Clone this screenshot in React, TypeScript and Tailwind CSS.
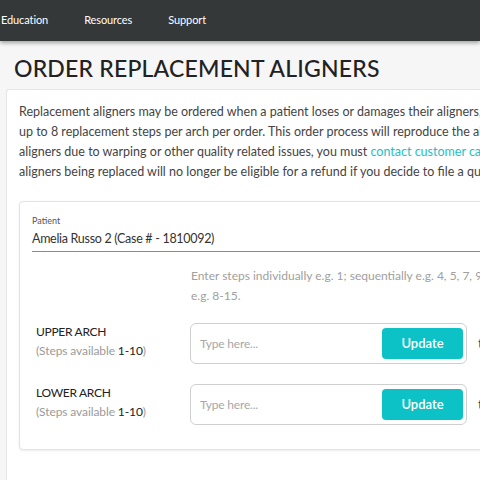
import React from "react";

const ArchRow: React.FC<{ label: string }> = ({ label }) => (
  <div className="flex items-center">
    <div className="-mt-[5px] w-[158px] pl-[4px] leading-[19px]">
      <div className="text-[12px] tracking-[-0.3px] text-[#222]">{label}</div>
      <div className="text-[12px] tracking-[-0.1px] text-[#9a9a9a]">
        (Steps available <span className="text-[#222]">1-10</span>)
      </div>
    </div>
    <div className="flex h-[41px] w-[277px] items-center justify-between rounded-[6px] border border-[#cfcfcf] bg-white pl-[9px] pr-[3px]">
      <input
        type="text"
        placeholder="Type here..."
        className="w-[150px] bg-transparent text-[12px] tracking-[-0.2px] text-[#333] placeholder:text-[#a8a8a8] focus:outline-none"
      />
      <button className="h-[31px] w-[81px] rounded-[4px] bg-[#0dc2c6] text-[13px] font-semibold text-white">
        Update
      </button>
    </div>
    <span className="ml-[11px] text-[13px] text-[#444]">to</span>
  </div>
);

const App: React.FC = () => {
  return (
    <div
      className="h-[480px] w-[480px] overflow-hidden bg-[#f6f6f6]"
      style={{ fontFamily: "Lato, 'Open Sans', sans-serif" }}
    >
      {/* Top nav */}
      <div className="relative z-10 flex h-[41px] items-center gap-[36px] bg-[#353839] pl-[1px] text-[11px] tracking-[-0.1px] text-white shadow-[0_2px_4px_rgba(0,0,0,0.35)]">
        <span>Education</span>
        <span>Resources</span>
        <span>Support</span>
      </div>

      <div className="w-[800px]">
        <h1 className="pl-[14px] pt-[12px] text-[23px] font-medium leading-[30px] tracking-[0.2px] text-[#222]">
          ORDER REPLACEMENT ALIGNERS
        </h1>

        {/* Outer card */}
        <div className="ml-[6px] mt-[6px] rounded-tl-[3px] border-l border-t border-[#e6e6e6] bg-white pb-[40px] pl-[12px] pt-[12px]">
          <div className="whitespace-nowrap text-[12.5px] leading-[20px] text-[#444]">
            <div>
              Replacement aligners may be ordered when a patient loses or damages their aligners, and you can order
            </div>
            <div>
              up to 8 replacement steps per arch per order. This order process will reproduce the aligners as originally manufactured.
            </div>
            <div>
              aligners due to warping or other quality related issues, you must{" "}
              <a className="text-[#1ec0c8]">contact customer care</a>. Please note that the
            </div>
            <div>
              aligners being replaced will no longer be eligible for a refund if you decide to file a quality complaint.
            </div>
          </div>

          {/* Inner card */}
          <div className="mt-[19px] rounded-[4px] border border-[#e3e3e3] bg-white pb-[24px] pl-[12px] pt-[13px] shadow-[0_1px_3px_rgba(0,0,0,0.08)]">
            <div className="text-[9px] leading-[12px] text-[#555]">Patient</div>
            <div className="mt-[3px] border-b border-[#8a8a8a] pb-[3px] text-[12.5px] leading-[18px] tracking-[-0.3px] text-[#333]">
              Amelia Russo 2 (Case # - 1810092)
            </div>

            <div className="mt-[14px] pl-[159px] text-[12px] leading-[20px] text-[#a0a0a0]">
              <div className="whitespace-nowrap">
                Enter steps individually e.g. 1; sequentially e.g. 4, 5, 7, 9; or as a range
              </div>
              <div>e.g. 8-15.</div>
            </div>

            <div className="mt-[17px] flex flex-col gap-[20px]">
              <ArchRow label="UPPER ARCH" />
              <ArchRow label="LOWER ARCH" />
            </div>
          </div>
        </div>
      </div>
    </div>
  );
};

export default App;
